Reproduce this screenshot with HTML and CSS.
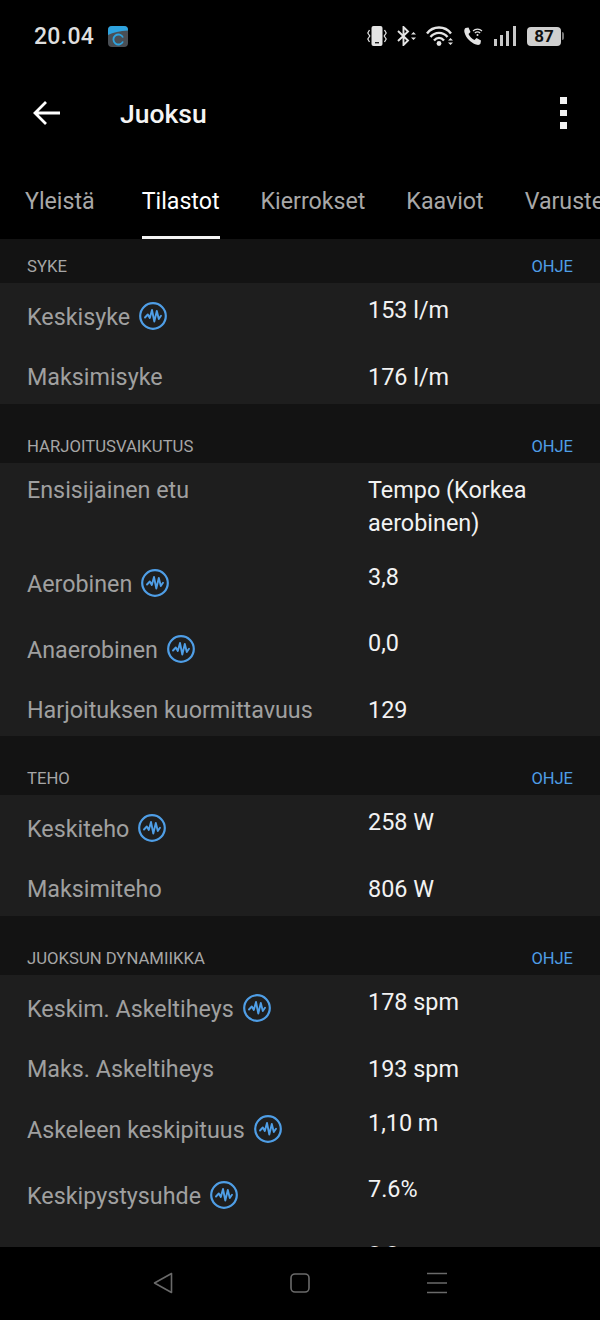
FILE: index.html
```html
<!DOCTYPE html>
<html lang="fi">
<head>
<meta charset="utf-8">
<title>Juoksu</title>
<link rel="stylesheet" href="styles.css">
</head>
<body>
<svg class="defs" width="0" height="0" aria-hidden="true">
  <symbol id="wave" viewBox="0 0 28 28">
    <circle cx="14" cy="14" r="12.8" fill="none" stroke="#4f9ee6" stroke-width="2.2"/>
    <path d="M6 15.5 L8.800 12.500 L10.800 16 L13 8 L15.300 19.500 L17.800 9 L19.800 17 L22 13.800" fill="none" stroke="#4f9ee6" stroke-width="1.900" stroke-linejoin="round" stroke-linecap="round"/>
  </symbol>
</svg>
<div class="screen">
  <header class="top">
    <div class="status">
      <div class="status-left">
        <span class="time">20.04</span>
        <svg class="app-logo" width="20" height="21" viewBox="0 0 20 21">
          <rect width="20" height="21" rx="4" fill="#4a4f55"/>
          <path d="M0 9 V4 a4 4 0 0 1 4-4 H16 a4 4 0 0 1 4 4 V4.500 C12 5 5 6.500 0 9Z" fill="#2ea3df"/>
          <path d="M15 11.500 A5 5 0 1 0 15 15.500" fill="none" stroke="#2ea3df" stroke-width="1.800"/>
        </svg>
      </div>
      <div class="status-right">
        <svg width="20" height="20" viewBox="0 0 20 20">
          <rect x="4.500" y="0" width="11" height="20" rx="2" fill="#e4e4e4"/>
          <rect x="8" y="16" width="4" height="1.400" fill="#222"/>
          <path d="M2.500 4 L0.800 7 L2.800 10 L0.800 13 L2.500 16 M17.500 4 L19.200 7 L17.200 10 L19.200 13 L17.500 16" fill="none" stroke="#e4e4e4" stroke-width="1.200"/>
        </svg>
        <svg width="21" height="20" viewBox="0 0 21 20">
          <path d="M2 5 L12 14.500 L7.500 19 V1 L12 5.500 L2 15" fill="none" stroke="#e4e4e4" stroke-width="1.900"/>
          <path d="M15 8.500 L17.500 6 L20 8.500Z M15 11.500 L17.500 14 L20 11.500Z" fill="#e4e4e4"/>
        </svg>
        <svg width="28" height="20" viewBox="0 0 28 20">
          <path d="M1 7.500 C7 -0.500 19 -0.500 25 7.500 M4.500 11 C9 5.500 17 5.500 21.500 11 M8 14.500 C11 11 15 11 18 14.500" fill="none" stroke="#e4e4e4" stroke-width="2.400"/>
          <circle cx="13" cy="17.500" r="2.400" fill="#e4e4e4"/>
          <path d="M22 14.500 L24.500 12 L27 14.500Z M22 16.500 L24.500 19 L27 16.500Z" fill="#e4e4e4"/>
        </svg>
        <svg width="20" height="20" viewBox="0 0 20 20">
          <path d="M2.500 2 L5.500 1.500 L7.500 6 L5.500 8 C6.500 10.500 9 13 11.500 14 L13.500 12 L18 14.500 L17.500 17.500 C17 19 15 19.200 13 18.500 C7.500 16.500 3 12 1.500 6.500 C1 4.500 1.300 3 2.500 2Z" fill="#e4e4e4"/>
          <path d="M10 5 C12.500 2.500 16.500 2.500 19 5 M11.800 7 C13.500 5.500 15.500 5.500 17.200 7" fill="none" stroke="#e4e4e4" stroke-width="1.100"/>
          <circle cx="14.500" cy="9" r="1" fill="#e4e4e4"/>
        </svg>
        <svg class="signal" width="22" height="20" viewBox="0 0 22 20">
          <rect x="0" y="13" width="3" height="7" fill="#c8c8c8"/>
          <rect x="6" y="9" width="3" height="11" fill="#c8c8c8"/>
          <rect x="12" y="5" width="3" height="15" fill="#c8c8c8"/>
          <rect x="19" y="0" width="3" height="20" fill="#c8c8c8"/>
        </svg>
        <div class="battery"><span class="battery-body">87</span><span class="battery-tip"></span></div>
      </div>
    </div>
    <div class="appbar">
      <svg class="back" width="28" height="26" viewBox="0 0 28 26">
        <path d="M27 13 H3 M13 2 L2 13 L13 24" fill="none" stroke="#fff" stroke-width="2.800"/>
      </svg>
      <h1 class="title">Juoksu</h1>
      <div class="kebab"><span></span><span></span><span></span></div>
    </div>
    <nav class="tabs">
      <span class="tab first">Yleistä</span>
      <span class="tab active">Tilastot</span>
      <span class="tab">Kierrokset</span>
      <span class="tab">Kaaviot</span>
      <span class="tab">Varusteet</span>
    </nav>
  </header>

  <main class="content">
    <section class="section">
      <div class="section-head"><span>SYKE</span><span class="help">OHJE</span></div>
      <div class="card">
        <div class="row tall"><div class="label">Keskisyke<svg class="wave"><use href="#wave"/></svg></div><div class="value">153 l/m</div></div>
        <div class="row"><div class="label">Maksimisyke</div><div class="value">176 l/m</div></div>
      </div>
    </section>
    <section class="section">
      <div class="section-head"><span>HARJOITUSVAIKUTUS</span><span class="help">OHJE</span></div>
      <div class="card">
        <div class="row multi"><div class="label">Ensisijainen etu</div><div class="value">Tempo (Korkea aerobinen)</div></div>
        <div class="row tall"><div class="label">Aerobinen<svg class="wave"><use href="#wave"/></svg></div><div class="value">3,8</div></div>
        <div class="row tall"><div class="label">Anaerobinen<svg class="wave"><use href="#wave"/></svg></div><div class="value">0,0</div></div>
        <div class="row short"><div class="label">Harjoituksen kuormittavuus</div><div class="value">129</div></div>
      </div>
    </section>
    <section class="section">
      <div class="section-head"><span>TEHO</span><span class="help">OHJE</span></div>
      <div class="card">
        <div class="row tall"><div class="label">Keskiteho<svg class="wave"><use href="#wave"/></svg></div><div class="value">258 W</div></div>
        <div class="row"><div class="label">Maksimiteho</div><div class="value">806 W</div></div>
      </div>
    </section>
    <section class="section">
      <div class="section-head"><span>JUOKSUN DYNAMIIKKA</span><span class="help">OHJE</span></div>
      <div class="card">
        <div class="row tall"><div class="label">Keskim. Askeltiheys<svg class="wave"><use href="#wave"/></svg></div><div class="value">178 spm</div></div>
        <div class="row"><div class="label">Maks. Askeltiheys</div><div class="value">193 spm</div></div>
        <div class="row tall"><div class="label">Askeleen keskipituus<svg class="wave"><use href="#wave"/></svg></div><div class="value">1,10 m</div></div>
        <div class="row tall"><div class="label">Keskipystysuhde<svg class="wave"><use href="#wave"/></svg></div><div class="value">7.6%</div></div>
        <div class="row tall"><div class="label"></div><div class="value">8,8 cm</div></div>
      </div>
    </section>
  </main>

  <footer class="navbar">
    <svg width="20" height="22" viewBox="0 0 20 22"><path d="M18.500 1.500 V20.500 L1.500 11Z" fill="none" stroke="#6a6a6a" stroke-width="1.600" stroke-linejoin="round"/></svg>
    <svg width="20" height="22" viewBox="0 0 20 22"><rect x="1" y="2" width="18" height="18" rx="4" fill="none" stroke="#6a6a6a" stroke-width="1.600"/></svg>
    <svg width="20" height="22" viewBox="0 0 20 22"><path d="M0 1.500 H20 M0 11 H20 M0 20.500 H20" stroke="#6a6a6a" stroke-width="1.600"/></svg>
  </footer>
</div>
</body>
</html>
```
FILE: styles.css
```css
* { box-sizing: border-box; }
html, body { margin: 0; padding: 0; background: #000; }
body { font-family: Roboto, "Liberation Sans", sans-serif; color: #fff; }
.defs { display: block; height: 0; }
.screen { width: 600px; height: 1320px; display: flex; flex-direction: column; overflow: hidden; background: #000; }

.top { flex: none; height: 239px; background: #000; }
.status { height: 72px; display: flex; justify-content: space-between; align-items: center; padding: 0 36px 0 34px; }
.status-left { display: flex; align-items: center; gap: 14px; }
.time { font-size: 23px; font-weight: 500; color: #dedede; letter-spacing: 0.3px; }
.app-logo { display: block; }
.status-right { display: flex; align-items: center; gap: 9px; }
.status-right svg { display: block; }
.signal { margin-left: 2px; margin-right: 2px; }
.battery { display: flex; align-items: center; }
.battery-body { width: 34px; height: 19px; border-radius: 4px; background: #cfcfcf; color: #111; font-size: 17px; font-weight: 700; line-height: 19px; text-align: center; }
.battery-tip { width: 2px; height: 8px; background: #777; border-radius: 0 2px 2px 0; margin-left: 1px; }

.appbar { height: 82px; display: flex; align-items: center; padding: 0 33px; }
.back { display: block; flex: none; }
.title { margin: 1px 0 0 59px; font-size: 26.500px; font-weight: 500; color: #f4f4f4; flex: 1; }
.kebab { display: flex; flex-direction: column; gap: 6px; }
.kebab span { display: block; width: 7px; height: 6.500px; background: #f2f2f2; }

.tabs { height: 85px; display: flex; gap: 41px; padding: 0 0 0 25px; overflow: hidden; }
.tab { flex: none; height: 85px; padding-top: 31px; font-size: 23.200px; line-height: 32px; color: #a8a8a8; }
.tab.first { margin-right: 6px; }
.tab.active { color: #fff; border-bottom: 3px solid #f4f4f4; }

.content { flex: 1; min-height: 0; overflow: hidden; background: #131313; }
.section + .section { margin-top: 15px; }
.section-head { height: 44px; display: flex; justify-content: space-between; align-items: center; padding: 11px 27px 0; font-size: 16.700px; color: #a6a6a6; }
.help { color: #4f9ee6; font-size: 16.500px; }
.card { background: #1e1e1e; }
.row { display: flex; align-items: center; height: 55px; padding: 2px 27px 0; font-size: 23.400px; line-height: 33px; }
.row.tall { height: 66px; }
.row.short { height: 54px; }
.row.multi { height: 87px; align-items: flex-start; padding-top: 11px; }
.label { flex: none; width: 341px; display: flex; align-items: center; gap: 9px; color: #a0a0a0; font-size: 23.300px; }
.value { flex: 1; color: #f2f2f2; }
.row.tall .value { align-self: flex-start; padding-top: 9px; }
.wave { display: block; width: 28px; height: 28px; flex: none; margin-top: -2px; }

.navbar { flex: none; height: 73px; display: flex; justify-content: center; align-items: center; gap: 117px; background: #000; padding-bottom: 1px; }
.navbar svg { display: block; }
```
